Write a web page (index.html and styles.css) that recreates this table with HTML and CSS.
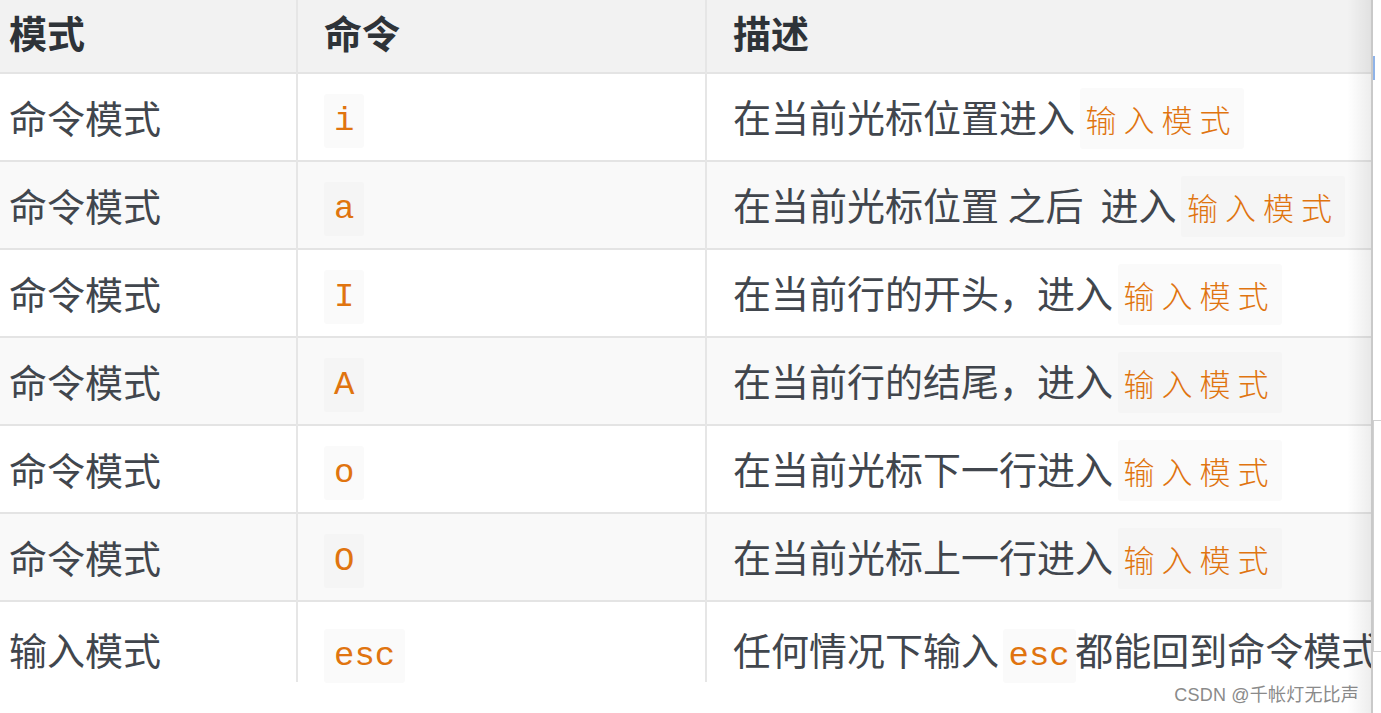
FILE: index.html
```html
<!DOCTYPE html>
<html lang="zh-CN">
<head>
<meta charset="utf-8">
<title>vi 模式</title>
<link rel="stylesheet" href="styles.css">
</head>
<body>
<div class="page">
  <div class="main">
    <table class="modes">
      <colgroup>
        <col class="c1"><col class="c2"><col class="c3">
      </colgroup>
      <thead>
        <tr><th>模式</th><th>命令</th><th>描述</th></tr>
      </thead>
      <tbody>
        <tr><td>命令模式</td><td><code>i</code></td><td>在当前光标位置进入 <code class="cjk">输入模式</code></td></tr>
        <tr class="alt"><td>命令模式</td><td><code>a</code></td><td>在当前光标位置 之后&nbsp; 进入 <code class="cjk">输入模式</code></td></tr>
        <tr><td>命令模式</td><td><code>I</code></td><td>在当前行的开头，进入 <code class="cjk">输入模式</code></td></tr>
        <tr class="alt"><td>命令模式</td><td><code>A</code></td><td>在当前行的结尾，进入 <code class="cjk">输入模式</code></td></tr>
        <tr><td>命令模式</td><td><code>o</code></td><td>在当前光标下一行进入 <code class="cjk">输入模式</code></td></tr>
        <tr class="alt"><td>命令模式</td><td><code>O</code></td><td>在当前光标上一行进入 <code class="cjk">输入模式</code></td></tr>
        <tr class="last"><td>输入模式</td><td><code>esc</code></td><td>任何情况下输入 <code class="tight">esc</code> 都能回到命令模式</td></tr>
      </tbody>
    </table>
    <div class="watermark">CSDN @千帐灯无比声</div>
  </div>
  <div class="side">
    <div class="side-blue"></div>
    <div class="side-box"></div>
  </div>
</div>
</body>
</html>
```

FILE: styles.css
```css
html, body {
  margin: 0;
  padding: 0;
  background: #ffffff;
}

.page {
  display: flex;
  width: 1381px;
  height: 713px;
  overflow: hidden;
}

.main {
  position: relative;
  width: 1373px;
  height: 713px;
  overflow: hidden;
  flex: none;
  background: #ffffff;
}

.main::after {
  content: "";
  position: absolute;
  top: 0;
  right: 0;
  width: 26px;
  height: 100%;
  background: linear-gradient(to right, rgba(0,0,0,0), rgba(0,0,0,0.07));
  border-right: 2px solid #c9c9c9;
  box-sizing: border-box;
  pointer-events: none;
}

.modes {
  margin-left: -17px;
  width: 1420px;
  table-layout: fixed;
  border-collapse: collapse;
  font-family: "Noto Sans CJK SC", "Noto Sans", sans-serif;
  font-size: 38px;
  color: #41464d;
}

.c1 { width: 314px; }
.c2 { width: 409px; }
.c3 { width: 697px; }

.modes th,
.modes td {
  padding: 0 0 0 26px;
  text-align: left;
  white-space: nowrap;
  border-right: 2px solid #e6e6e6;
  line-height: 52px;
}

.modes th:last-child,
.modes td:last-child {
  border-right: none;
}

.modes thead tr {
  height: 73px;
  background: #f2f2f2;
}

.modes th {
  font-weight: 700;
  color: #2e3338;
  padding-bottom: 8px;
}

.modes tbody tr {
  height: 88px;
  border-top: 2px solid #e4e4e4;
  background: #ffffff;
}

.modes tbody tr.alt {
  background: #f9f9f9;
}

.modes tbody tr.last {
  height: 74px;
}

.modes tbody tr.last td {
  vertical-align: top;
  padding-top: 21px;
}

.modes code {
  font-family: "Liberation Mono", "DejaVu Sans Mono", "Noto Sans CJK SC", monospace;
  font-size: 34px;
  color: #e0740f;
  background: #fafafa;
  padding: 8px 10px;
  margin: 0;
  border-radius: 3px;
}

.modes tr.alt code {
  background: #f5f5f5;
}

.modes td:last-child code {
  margin: 0 0 0 -4px;
  padding: 8px 6px;
}

.modes td:last-child code.tight {
  margin: 0 -9px 0 -5px;
}

.modes code.cjk {
  font-family: "Noto Sans CJK SC", sans-serif;
  font-size: 31px;
  font-weight: 300;
  letter-spacing: 7px;
  padding: 8px 6px 8px 8px;
  margin-left: -1px;
}

.watermark {
  position: absolute;
  right: 14px;
  bottom: 7px;
  font-family: "Liberation Sans", "Noto Sans CJK SC", sans-serif;
  font-size: 18px;
  color: #8a8a8a;
  letter-spacing: 0.2px;
  background: rgba(255,255,255,0.6);
}

.side {
  flex: none;
  width: 8px;
  height: 713px;
  background: #ffffff;
  display: flex;
  flex-direction: column;
}

.side-blue {
  margin-top: 56px;
  width: 2px;
  height: 24px;
  background: #8fb3e8;
}

.side-box {
  margin-top: 340px;
  height: 230px;
  border-top: 1px solid #d0d0d0;
  border-left: 1px solid #d0d0d0;
  border-bottom: 1px solid #d0d0d0;
}
```
